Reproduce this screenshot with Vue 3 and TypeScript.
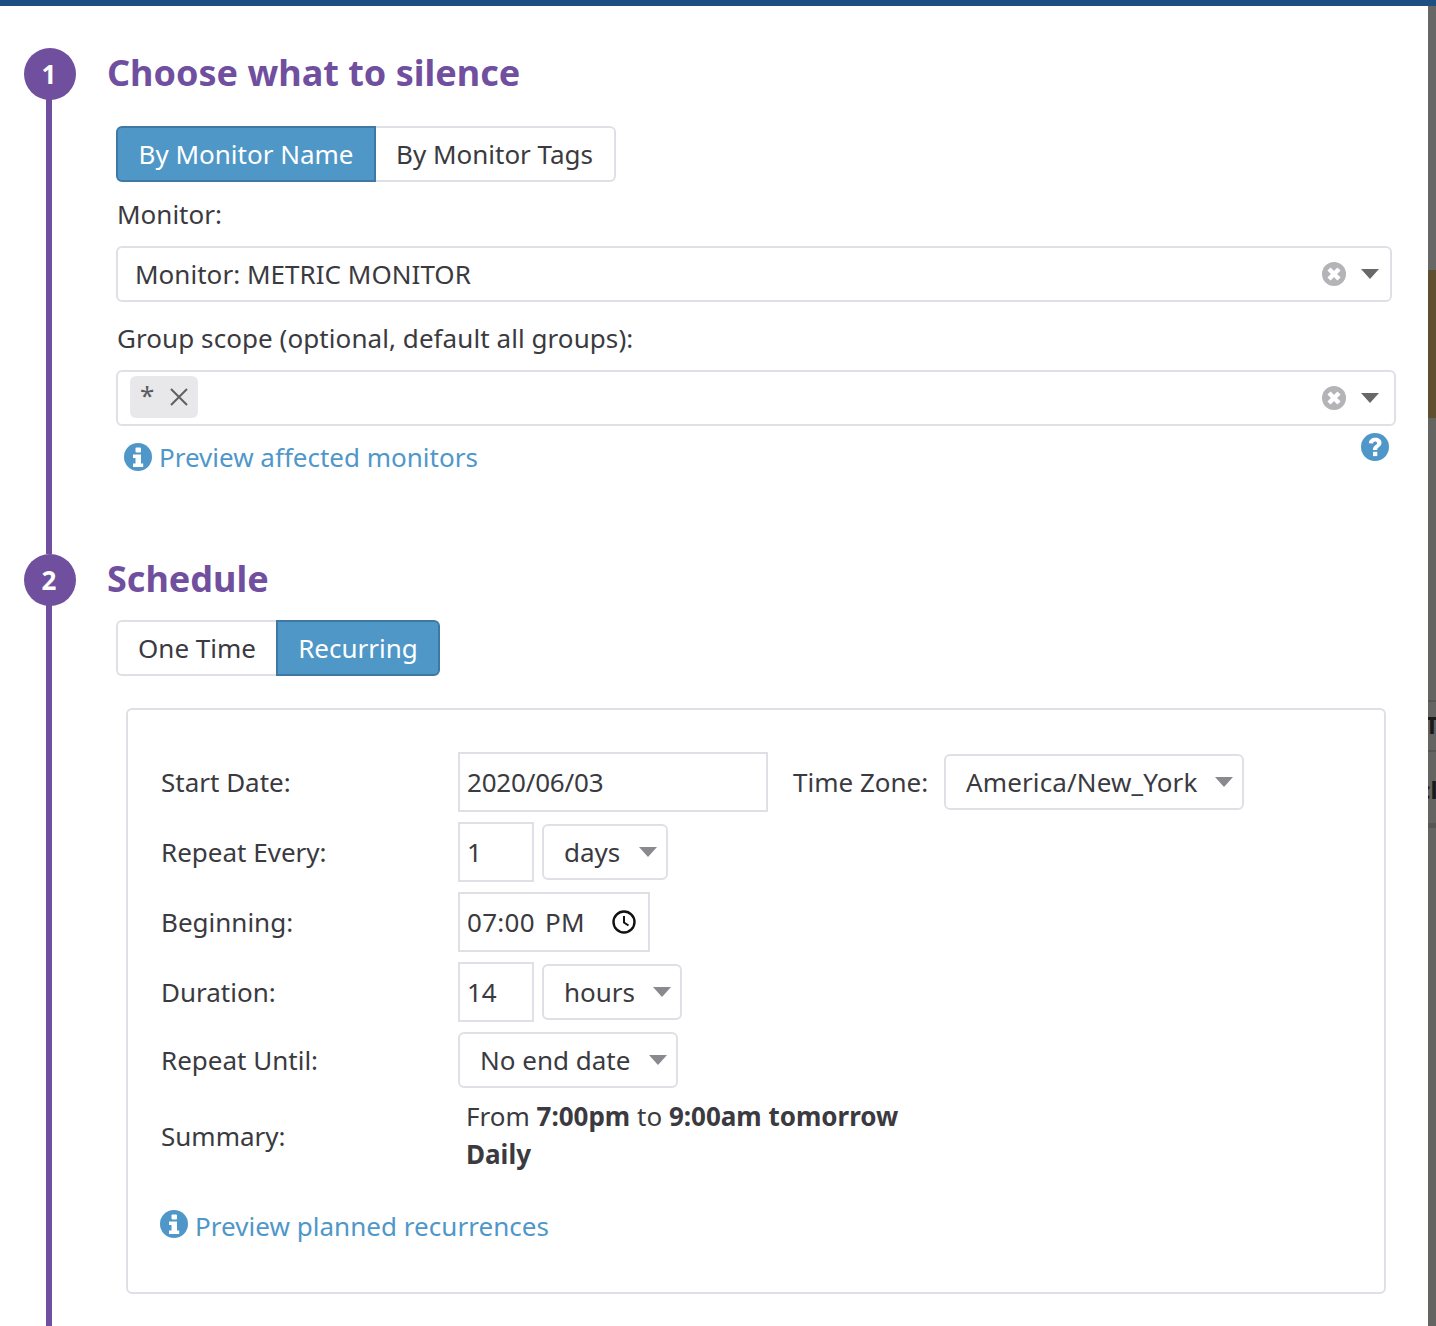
<script setup lang="ts">
const scheduleRows = [
  { label: "Repeat Every:", value: "1", unit: "days", unitClass: "unit-days" },
  { label: "Duration:", value: "14", unit: "hours", unitClass: "unit-hours" },
];
</script>

<template>
  <div class="page">
    <div class="top-bar"></div>
    <div class="layout">
      <main class="modal">
        <section class="step step-first">
          <div class="step-header">
            <div class="step-number">1</div>
            <h2 class="step-title">Choose what to silence</h2>
          </div>
          <div class="step-body">
            <div class="btn-group">
              <button class="toggle toggle-active name-tab">By Monitor Name</button>
              <button class="toggle tags-tab">By Monitor Tags</button>
            </div>
            <div class="field-label">Monitor:</div>
            <div class="select-box monitor-box">
              <span class="select-value">Monitor: METRIC MONITOR</span>
              <svg class="clear-icon" viewBox="0 0 24 24">
                <circle cx="12" cy="12" r="12" fill="#b3b3b8" />
                <path d="M7 7l10 10M17 7L7 17" stroke="#fff" stroke-width="4.500" />
              </svg>
              <span class="caret caret-dark"></span>
            </div>
            <div class="field-label group-label">Group scope (optional, default all groups):</div>
            <div class="select-box group-box">
              <span class="tag">
                <span class="tag-star">*</span>
                <svg class="tag-x" viewBox="0 0 18 18">
                  <path d="M1 1l16 16M17 1L1 17" stroke="#5f5f64" stroke-width="2" fill="none" />
                </svg>
              </span>
              <svg class="clear-icon" viewBox="0 0 24 24">
                <circle cx="12" cy="12" r="12" fill="#b3b3b8" />
                <path d="M7 7l10 10M17 7L7 17" stroke="#fff" stroke-width="4.500" />
              </svg>
              <span class="caret caret-dark"></span>
            </div>
            <div class="preview-row">
              <a class="link affected-link">
                <svg class="info-icon" viewBox="0 0 28 28">
                  <circle cx="14" cy="14" r="14" fill="#4f97c9" />
                  <rect x="11.500" y="4.500" width="5.500" height="5" rx="1" fill="#fff" />
                  <path d="M9 11.500h8v9h2.200V24H9v-3.500h2.500V15H9z" fill="#fff" />
                </svg>
                Preview affected monitors
              </a>
              <svg class="help-icon" viewBox="0 0 28 28">
                <circle cx="14" cy="14" r="14" fill="#4f97c9" />
                <path d="M7.800 10.200C8.200 6.800 10.800 4.800 14.300 4.800c3.600 0 6.200 2 6.200 5 0 4.200-4.300 4-4.300 7.300h-4.300c0-4.800 4.200-4.700 4.200-7 0-1-.8-1.700-1.900-1.700-1.200 0-2 .8-2.200 2z" fill="#fff" />
                <rect x="12" y="18.800" width="4.300" height="4.300" fill="#fff" />
              </svg>
            </div>
          </div>
        </section>

        <section class="step step-second">
          <div class="step-header">
            <div class="step-number">2</div>
            <h2 class="step-title">Schedule</h2>
          </div>
          <div class="step-body">
            <div class="btn-group schedule-tabs">
              <button class="toggle once-tab">One Time</button>
              <button class="toggle toggle-active recurring-tab">Recurring</button>
            </div>
            <div class="panel">
              <div class="row">
                <div class="row-label">Start Date:</div>
                <div class="input date-input">2020/06/03</div>
                <div class="tz-label">Time Zone:</div>
                <div class="dropdown tz-select"><span class="tz-text">America/New_York</span><span class="caret"></span></div>
              </div>
              <div class="row">
                <div class="row-label">{{ scheduleRows[0].label }}</div>
                <div class="input number-input">{{ scheduleRows[0].value }}</div>
                <div class="dropdown" :class="scheduleRows[0].unitClass">{{ scheduleRows[0].unit }}<span class="caret"></span></div>
              </div>
              <div class="row">
                <div class="row-label">Beginning:</div>
                <div class="input time-input">
                  <span class="time-text">07:00 PM</span>
                  <svg class="clock-icon" viewBox="0 0 24 24">
                    <circle cx="12" cy="12" r="10.500" fill="none" stroke="#111" stroke-width="2.400" />
                    <path d="M12 6v6.500l4.500 3" fill="none" stroke="#111" stroke-width="2" />
                  </svg>
                </div>
              </div>
              <div class="row">
                <div class="row-label">{{ scheduleRows[1].label }}</div>
                <div class="input number-input">{{ scheduleRows[1].value }}</div>
                <div class="dropdown" :class="scheduleRows[1].unitClass">{{ scheduleRows[1].unit }}<span class="caret"></span></div>
              </div>
              <div class="row row-short">
                <div class="row-label">Repeat Until:</div>
                <div class="dropdown until-select">No end date<span class="caret"></span></div>
              </div>
              <div class="row row-summary">
                <div class="row-label">Summary:</div>
                <div class="summary">
                  <div>From <b>7:00pm</b> to <b>9:00am tomorrow</b></div>
                  <div><b>Daily</b></div>
                </div>
              </div>
              <a class="link planned-link">
                <svg class="info-icon" viewBox="0 0 28 28">
                  <circle cx="14" cy="14" r="14" fill="#4f97c9" />
                  <rect x="11.500" y="4.500" width="5.500" height="5" rx="1" fill="#fff" />
                  <path d="M9 11.500h8v9h2.200V24H9v-3.500h2.500V15H9z" fill="#fff" />
                </svg>
                Preview planned recurrences
              </a>
            </div>
          </div>
        </section>
      </main>
      <aside class="backdrop">
        <div class="bd-gray"></div>
        <div class="bd-brown"></div>
        <div class="bd-rest"></div>
        <div class="bd-band band-a"></div>
        <div class="bd-band band-b"></div>
        <div class="bd-band band-c"></div>
        <span class="bd-letter letter-t">T</span>
        <span class="bd-letter letter-c">cl</span>
      </aside>
    </div>
  </div>
</template>

<style scoped>
.page {
  width: 1436px;
  height: 1326px;
  overflow: hidden;
  display: flex;
  flex-direction: column;
  font-family: "Noto Sans", "Open Sans", sans-serif;
  font-size: 26px;
  color: #3a3a40;
}

.top-bar {
  height: 6px;
  flex: none;
  background: #1d4f82;
}

.layout {
  flex: 1;
  display: flex;
  min-height: 0;
}

.modal {
  width: 1428px;
  flex: none;
  background: #fff;
  padding: 42px 0 0 24px;
  box-sizing: border-box;
}

.backdrop {
  flex: 1;
  display: flex;
  flex-direction: column;
  position: relative;
  overflow: hidden;
}

.bd-gray {
  height: 264px;
  background: #676767;
}

.bd-brown {
  height: 148px;
  background: #5f4f30;
}

.bd-rest {
  flex: 1;
  background: #646462;
}

.bd-band {
  position: absolute;
  left: 0;
  right: 0;
  background: #565654;
}

.band-a {
  top: 694px;
  height: 2px;
}

.band-b {
  top: 744px;
  height: 2px;
}

.band-c {
  top: 817px;
  height: 5px;
}

.bd-letter {
  position: absolute;
  color: #1a1a1a;
  font-weight: 700;
  font-size: 24px;
  line-height: 24px;
}

.letter-t {
  left: -3px;
  top: 707px;
}

.letter-c {
  left: -10px;
  top: 772px;
}

.step {
  position: relative;
}

.step-first {
  height: 506px;
}

.step-second {
  height: 800px;
}

.step::before {
  content: "";
  position: absolute;
  left: 22px;
  top: 40px;
  bottom: 0;
  width: 6px;
  background: #704f9f;
}

.step-header {
  display: flex;
  align-items: center;
  height: 52px;
}

.step-number {
  position: relative;
  width: 52px;
  height: 52px;
  box-sizing: border-box;
  padding-right: 2px;
  border-radius: 50%;
  background: #704f9f;
  color: #fff;
  font-size: 26px;
  font-weight: 700;
  display: flex;
  align-items: center;
  justify-content: center;
  flex: none;
}

.step-title {
  margin: 0 0 2px 31px;
  font-size: 36px;
  line-height: 52px;
  font-weight: 700;
  color: #704f9f;
}

.step-body {
  margin-left: 92px;
}

.btn-group {
  display: flex;
  margin-top: 26px;
}

.schedule-tabs {
  margin-top: 14px;
}

.toggle {
  height: 56px;
  box-sizing: border-box;
  border: 2px solid #dfdfe6;
  background: #fff;
  color: #3a3a40;
  font: inherit;
  padding: 0;
  display: flex;
  align-items: center;
  justify-content: center;
}

.toggle-active {
  background: #4f97c7;
  border-color: #3f79a3;
  color: #fff;
}

.name-tab {
  width: 260px;
  border-radius: 6px 0 0 6px;
}

.tags-tab {
  width: 240px;
  padding-right: 1px;
  border-left: 0;
  border-radius: 0 6px 6px 0;
}

.once-tab {
  width: 160px;
  border-right: 0;
  border-radius: 6px 0 0 6px;
}

.recurring-tab {
  width: 164px;
  border-radius: 0 6px 6px 0;
}

.field-label {
  height: 64px;
  line-height: 64px;
  padding-left: 1px;
}

.group-label {
  line-height: 72px;
  height: 68px;
  letter-spacing: 0.07px;
}

.select-box {
  height: 56px;
  box-sizing: border-box;
  border: 2px solid #dfdfe6;
  border-radius: 6px;
  display: flex;
  align-items: center;
  background: #fff;
}

.monitor-box {
  width: 1276px;
  padding: 0 11px 0 17px;
}

.group-box {
  width: 1280px;
  padding: 0 15px 0 12px;
}

.select-value {
  flex: 1;
  letter-spacing: 0.03px;
}

.clear-icon {
  width: 24px;
  height: 24px;
  margin-left: auto;
  flex: none;
}

.caret {
  display: inline-block;
  width: 0;
  height: 0;
  border-left: 9px solid transparent;
  border-right: 9px solid transparent;
  border-top: 10px solid #8a8a8e;
  flex: none;
}

.caret-dark {
  border-top-color: #68686a;
  margin-left: 15px;
}

.tag {
  width: 68px;
  height: 42px;
  margin-top: -2px;
  box-sizing: border-box;
  border-radius: 6px;
  background: #e8e8eb;
  display: flex;
  align-items: center;
  padding-left: 10px;
  color: #5a5a5f;
  font-size: 26px;
}

.tag-star {
  line-height: 36px;
  margin-top: -4px;
}

.tag-x {
  width: 18px;
  height: 18px;
  margin-left: 16px;
}

.preview-row {
  width: 1280px;
  height: 50px;
  position: relative;
}

.link {
  color: #4f97c9;
  display: flex;
  align-items: center;
  line-height: 36px;
}

.link .info-icon {
  width: 28px;
  height: 28px;
  margin-right: 7px;
  flex: none;
}

.affected-link {
  padding: 13px 0 0 8px;
}

.help-icon {
  position: absolute;
  left: 1245px;
  top: 7px;
  width: 28px;
  height: 28px;
}

.panel {
  width: 1260px;
  height: 586px;
  margin: 32px 0 0 10px;
  box-sizing: border-box;
  border: 2px solid #dfdfe6;
  border-radius: 6px;
  padding: 42px 0 0 32px;
}

.row {
  display: flex;
  align-items: center;
  height: 60px;
  margin-bottom: 10px;
}

.row-short {
  height: 56px;
}

.row-summary {
  height: 76px;
}

.row-label {
  width: 298px;
  flex: none;
  padding-left: 1px;
  box-sizing: border-box;
}

.input {
  height: 60px;
  box-sizing: border-box;
  border: 2px solid #dfdfe6;
  padding-left: 7px;
  display: flex;
  align-items: center;
}

.date-input {
  width: 310px;
  letter-spacing: -0.2px;
}

.number-input {
  width: 76px;
}

.time-input {
  width: 192px;
}

.time-text {
  word-spacing: 3px;
  letter-spacing: 0.3px;
}

.clock-icon {
  width: 24px;
  height: 24px;
  margin-left: 27px;
}

.tz-label {
  margin-left: 25px;
  width: 151px;
}

.tz-text {
  letter-spacing: 0.13px;
}

.dropdown {
  height: 56px;
  box-sizing: border-box;
  border: 2px solid #dfdfe6;
  border-radius: 6px;
  padding: 0 9px 0 20px;
  display: flex;
  align-items: center;
  justify-content: space-between;
}

.dropdown .caret {
  margin: -1px 0 0 0;
}

.tz-select {
  width: 300px;
}

.unit-days {
  width: 126px;
  margin-left: 8px;
}

.unit-hours {
  width: 140px;
  margin-left: 8px;
}

.until-select {
  width: 220px;
}

.summary {
  line-height: 38px;
  margin-top: -2px;
  padding-left: 8px;
}

.summary b {
  font-weight: 700;
}

.planned-link {
  margin-top: 34px;
  letter-spacing: 0.04px;
}

.planned-link .info-icon {
  margin-top: -4px;
}
</style>

<style>
html,
body {
  margin: 0;
  background: #fff;
}
</style>
